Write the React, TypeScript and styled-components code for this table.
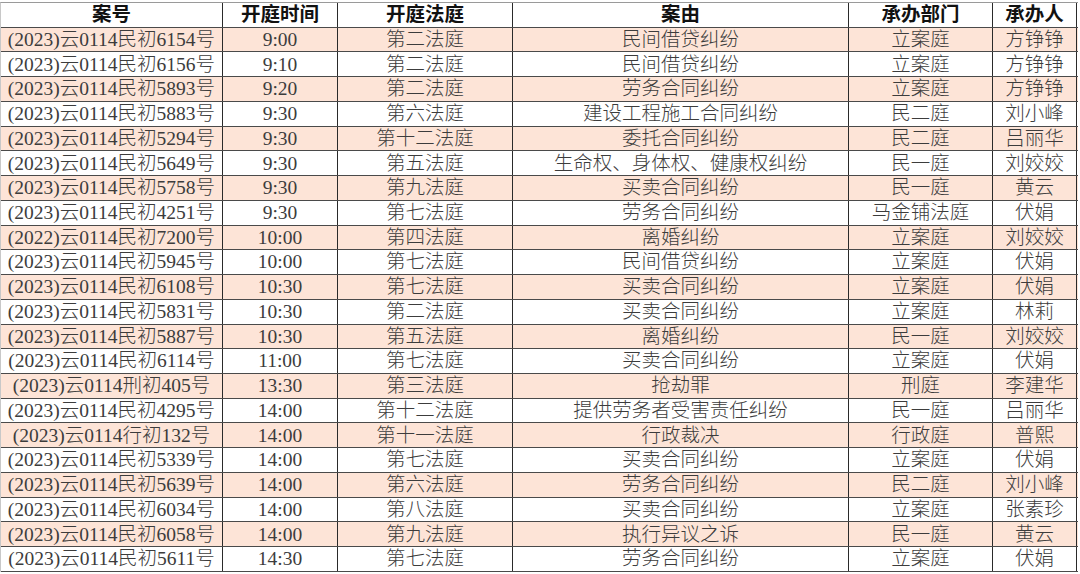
import React from 'react';
import styled, {createGlobalStyle} from "styled-components";

const GlobalStyle = createGlobalStyle`
    html, body {
        margin: 0;
        padding: 0;
        background: #ffffff;
    }
`

const columns = "222px 115px 175px 336px 144px 84px";

const headers = ["案号", "开庭时间", "开庭法庭", "案由", "承办部门", "承办人"];

const rows = [
    ["(2023)云0114民初6154号", "9:00", "第二法庭", "民间借贷纠纷", "立案庭", "方铮铮"],
    ["(2023)云0114民初6156号", "9:10", "第二法庭", "民间借贷纠纷", "立案庭", "方铮铮"],
    ["(2023)云0114民初5893号", "9:20", "第二法庭", "劳务合同纠纷", "立案庭", "方铮铮"],
    ["(2023)云0114民初5883号", "9:30", "第六法庭", "建设工程施工合同纠纷", "民二庭", "刘小峰"],
    ["(2023)云0114民初5294号", "9:30", "第十二法庭", "委托合同纠纷", "民二庭", "吕丽华"],
    ["(2023)云0114民初5649号", "9:30", "第五法庭", "生命权、身体权、健康权纠纷", "民一庭", "刘姣姣"],
    ["(2023)云0114民初5758号", "9:30", "第九法庭", "买卖合同纠纷", "民一庭", "黄云"],
    ["(2023)云0114民初4251号", "9:30", "第七法庭", "劳务合同纠纷", "马金铺法庭", "伏娟"],
    ["(2022)云0114民初7200号", "10:00", "第四法庭", "离婚纠纷", "立案庭", "刘姣姣"],
    ["(2023)云0114民初5945号", "10:00", "第七法庭", "民间借贷纠纷", "立案庭", "伏娟"],
    ["(2023)云0114民初6108号", "10:30", "第七法庭", "买卖合同纠纷", "立案庭", "伏娟"],
    ["(2023)云0114民初5831号", "10:30", "第二法庭", "买卖合同纠纷", "立案庭", "林莉"],
    ["(2023)云0114民初5887号", "10:30", "第五法庭", "离婚纠纷", "民一庭", "刘姣姣"],
    ["(2023)云0114民初6114号", "11:00", "第七法庭", "买卖合同纠纷", "立案庭", "伏娟"],
    ["(2023)云0114刑初405号", "13:30", "第三法庭", "抢劫罪", "刑庭", "李建华"],
    ["(2023)云0114民初4295号", "14:00", "第十二法庭", "提供劳务者受害责任纠纷", "民一庭", "吕丽华"],
    ["(2023)云0114行初132号", "14:00", "第十一法庭", "行政裁决", "行政庭", "普熙"],
    ["(2023)云0114民初5339号", "14:00", "第七法庭", "买卖合同纠纷", "立案庭", "伏娟"],
    ["(2023)云0114民初5639号", "14:00", "第六法庭", "劳务合同纠纷", "民二庭", "刘小峰"],
    ["(2023)云0114民初6034号", "14:00", "第八法庭", "买卖合同纠纷", "立案庭", "张素珍"],
    ["(2023)云0114民初6058号", "14:00", "第九法庭", "执行异议之诉", "民一庭", "黄云"],
    ["(2023)云0114民初5611号", "14:30", "第七法庭", "劳务合同纠纷", "立案庭", "伏娟"],
];

export default function App() {
    return (
        <>
            <GlobalStyle/>
            <Page>
                <Table>
                    <HeaderRow>
                        {headers.map((h) => (
                            <HeadCell key={h}>{h}</HeadCell>
                        ))}
                    </HeaderRow>
                    {rows.map((r, i) => (
                        <Row key={r[0]} $shaded={i % 2 === 0}>
                            {r.map((c, j) => (
                                <Cell key={j}>{c}</Cell>
                            ))}
                        </Row>
                    ))}
                </Table>
            </Page>
        </>
    );
}

const Page = styled.div`
    padding-top: 2px;
    width: 1080px;
`

const Table = styled.div`
    width: 1077px;
    border-top: 1px solid #9a9a9a;
    border-left: 1px solid #c8c8c8;
`

const Row = styled.div<{ $shaded?: boolean }>`
    display: grid;
    grid-template-columns: ${columns};
    height: 24.74px;
    box-sizing: border-box;
    border-bottom: 1px solid #4a4a4a;
    background: ${(p) => (p.$shaded ? "#fde4d7" : "#ffffff")};
`

const HeaderRow = styled(Row)`
    background: #ffffff;
`

const Cell = styled.div`
    display: flex;
    align-items: center;
    justify-content: center;
    border-right: 1px solid #2a2a2a;
    font-family: "Liberation Serif", "Noto Sans CJK SC", serif;
    font-size: 19.5px;
    font-weight: 300;
    color: #3c3c3c;
    white-space: nowrap;
    overflow: hidden;
    line-height: 1;
`

const HeadCell = styled(Cell)`
    font-weight: 700;
    color: #111111;
`
